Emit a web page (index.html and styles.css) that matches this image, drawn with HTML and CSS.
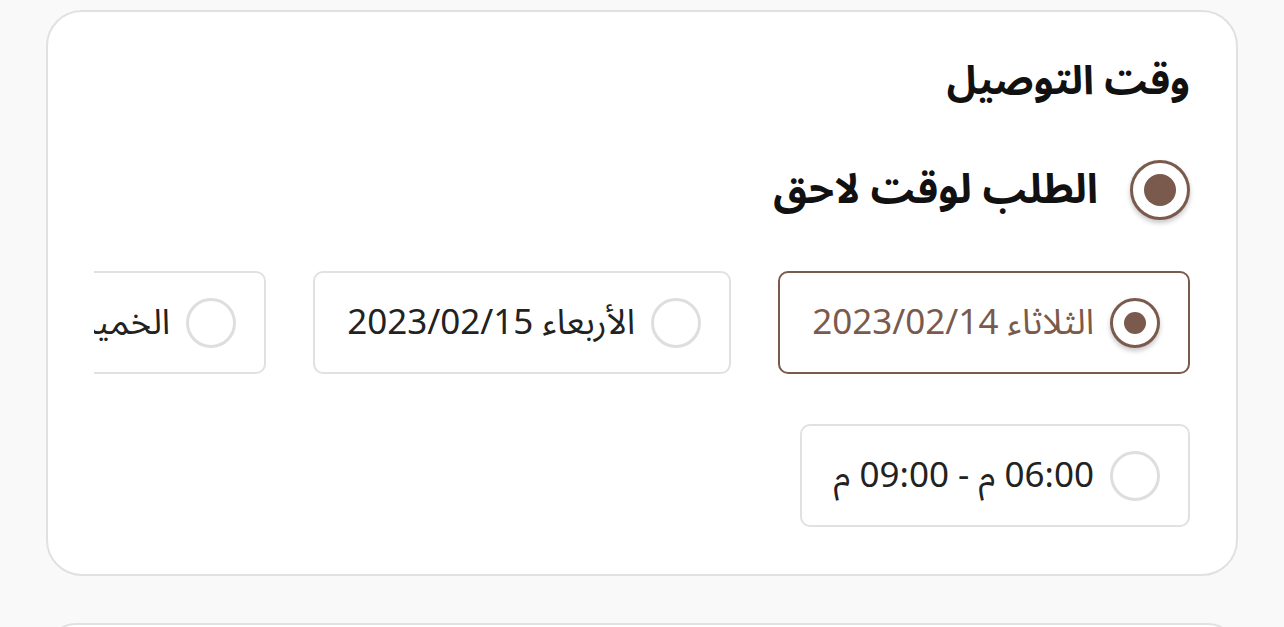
FILE: index.html
```html
<!DOCTYPE html>
<html lang="ar" dir="rtl">
<head>
<meta charset="utf-8">
<link rel="stylesheet" href="styles.css">
</head>
<body>
<main class="page">
  <section class="card">
    <h2 class="title">وقت التوصيل</h2>
    <label class="option">
      <span class="radio radio-lg is-on"><span class="dot"></span></span>
      <span class="option-text">الطلب لوقت لاحق</span>
    </label>
    <div class="dates">
      <div class="chip is-on">
        <span class="radio is-on"><span class="dot"></span></span>
        <span class="chip-text">الثلاثاء 2023/02/14</span>
      </div>
      <div class="chip">
        <span class="radio"></span>
        <span class="chip-text">الأربعاء 2023/02/15</span>
      </div>
      <div class="chip">
        <span class="radio"></span>
        <span class="chip-text">الخميس 2023/02/16</span>
      </div>
    </div>
    <div class="times">
      <div class="chip">
        <span class="radio"></span>
        <span class="chip-text">06:00 م - 09:00 م</span>
      </div>
    </div>
  </section>
  <section class="card card-next"></section>
</main>
</body>
</html>
```

FILE: styles.css
```css
* { box-sizing: border-box; }
html, body { margin: 0; padding: 0; }
body {
  background: #f9f9f9;
  font-family: "Noto Sans Arabic", "DejaVu Sans", sans-serif;
  color: #1f1f1f;
  overflow: hidden;
}
.page {
  padding: 10px 46px 0;
  display: flex;
  flex-direction: column;
  gap: 47px;
}
.card {
  background: #fff;
  border: 2px solid #e1e1e1;
  border-radius: 36px;
  padding: 44px 46px 47px;
  direction: rtl;
}
.card-next { height: 60px; padding: 0; }
.title {
  margin: 0;
  font-size: 40px;
  font-weight: 700;
  line-height: 52px;
  color: #111;
}
.option {
  display: flex;
  align-items: center;
  gap: 32px;
  height: 60px;
  margin-top: 52px;
}
.option-text {
  font-size: 41px;
  font-weight: 700;
  line-height: 60px;
  color: #111;
}
.radio {
  flex: none;
  width: 50px;
  height: 50px;
  border-radius: 50%;
  border: 3px solid #dedede;
  display: flex;
  align-items: center;
  justify-content: center;
  background: #fff;
}
.radio.is-on {
  border-color: #7a5a4c;
  box-shadow: 0 3px 5px rgba(0, 0, 0, 0.22);
}
.radio .dot {
  width: 22px;
  height: 22px;
  border-radius: 50%;
  background: #7a5a4c;
}
.radio-lg { width: 60px; height: 60px; }
.radio-lg .dot { width: 32px; height: 32px; }
.dates {
  display: flex;
  gap: 47px;
  overflow: hidden;
  margin-top: 51px;
}
.chip {
  flex: none;
  display: flex;
  align-items: center;
  gap: 16px;
  height: 103px;
  padding: 0 28px 0 32px;
  border: 2px solid #e1e1e4;
  border-radius: 10px;
  background: #fff;
}
.chip.is-on { border-color: #7a5a4c; }
.chip-text {
  font-size: 35px;
  line-height: 48px;
  color: #222;
  white-space: nowrap;
}
.chip.is-on .chip-text { color: #7a5a4c; }
.times {
  display: flex;
  margin-top: 50px;
}
```
